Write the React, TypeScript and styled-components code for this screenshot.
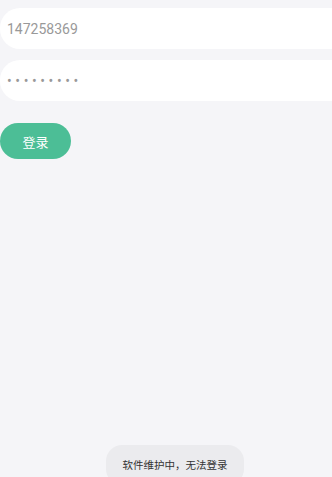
import styled, { createGlobalStyle } from 'styled-components';

const GlobalStyle = createGlobalStyle`
  html, body {
    margin: 0;
    padding: 0;
    background: #f5f5f8;
    overflow: hidden;
  }
  body {
    font-family: Roboto, "Noto Sans CJK SC", sans-serif;
  }
`;

const Page = styled.div`
  width: 100%;
  height: 477px;
  display: flex;
  flex-direction: column;
  padding-top: 8px;
  box-sizing: border-box;
`;

const Field = styled.input`
  width: 100%;
  height: 41px;
  box-sizing: border-box;
  border: none;
  outline: none;
  border-radius: 20px 0 0 20px;
  background: #ffffff;
  padding: 0 0 0 7px;
  font-family: Roboto, "Noto Sans CJK SC", sans-serif;
  font-size: 14px;
  color: #999999;
  letter-spacing: ${(p) => (p.type === 'password' ? '3.6px' : '0')};
  & + & {
    margin-top: 11px;
  }
`;

const LoginButton = styled.button`
  margin-top: 22px;
  width: 71px;
  height: 36px;
  border: none;
  border-radius: 18px;
  background: #4cbe96;
  color: #ffffff;
  font-family: "Noto Sans CJK SC", sans-serif;
  font-size: 13px;
  padding: 0;
`;

const Toast = styled.div`
  position: fixed;
  left: 106px;
  top: 445px;
  width: 138px;
  height: 40px;
  border-radius: 16px;
  background: #ebebee;
  color: #333333;
  font-family: "Noto Sans CJK SC", sans-serif;
  font-size: 10.5px;
  display: flex;
  justify-content: center;
  padding-top: 12px;
  box-sizing: border-box;
`;

export default function App() {
  return (
    <>
      <GlobalStyle />
      <Page>
        <Field type="text" defaultValue="147258369" />
        <Field type="password" defaultValue="123456789" />
        <div>
          <LoginButton>登录</LoginButton>
        </div>
      </Page>
      <Toast>软件维护中，无法登录</Toast>
    </>
  );
}
